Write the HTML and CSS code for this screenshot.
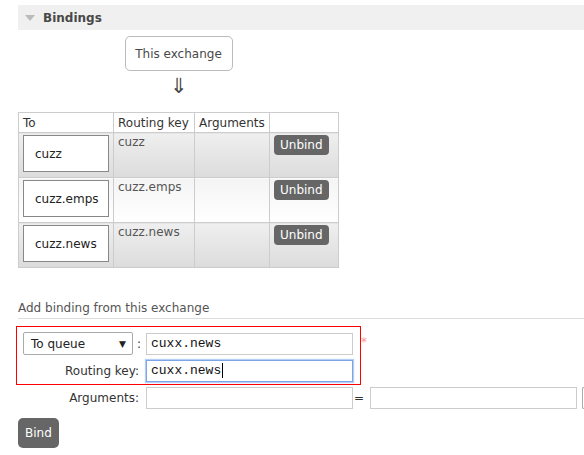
FILE: index.html
```html
<!DOCTYPE html>
<html>
<head>
<meta charset="utf-8">
<link rel="stylesheet" href="styles.css">
</head>
<body>
<div class="section-h"><span class="tri"></span><span class="title">Bindings</span></div>
<div class="bindings">
  <div class="flow">
    <div class="this-ex">This exchange</div>
    <div class="arrow">&#8659;</div>
  </div>
  <table class="list">
    <thead>
      <tr><th class="c-to">To</th><th class="c-rk">Routing key</th><th class="c-args">Arguments</th><th class="c-act"></th></tr>
    </thead>
    <tbody>
      <tr class="alt1"><td><div class="qbox">cuzz</div></td><td><div class="rk">cuzz</div></td><td></td><td><span class="btn">Unbind</span></td></tr>
      <tr class="alt2"><td><div class="qbox">cuzz.emps</div></td><td><div class="rk">cuzz.emps</div></td><td></td><td><span class="btn">Unbind</span></td></tr>
      <tr class="alt1"><td><div class="qbox">cuzz.news</div></td><td><div class="rk">cuzz.news</div></td><td></td><td><span class="btn">Unbind</span></td></tr>
    </tbody>
  </table>
</div>
<div class="add">
  <div class="add-h">Add binding from this exchange</div>
  <div class="form">
    <div class="row">
      <div class="lab"><div class="sel"><span>To queue</span><span class="dd">&#9660;</span></div><span class="colon">:</span></div>
      <div class="inp mono">cuxx.news</div>
      <span class="req">*</span>
    </div>
    <div class="row">
      <div class="lab"><span>Routing key:</span></div>
      <div class="inp mono focus">cuxx.news<span class="caret"></span></div>
    </div>
    <div class="row">
      <div class="lab"><span>Arguments:</span></div>
      <div class="inp"></div>
      <span class="eq">=</span>
      <div class="inp"></div>
      <div class="inp small"></div>
    </div>
    <div class="annot"></div>
  </div>
  <span class="btn big">Bind</span>
</div>
</body>
</html>
```
FILE: styles.css
```css
html, body { margin: 0; padding: 0; background: #fff; overflow: hidden; }
body {
  font-family: "DejaVu Sans", Verdana, sans-serif;
  font-size: 12px;
  color: #484848;
  width: 584px;
  height: 455px;
}
.section-h {
  margin: 5px 0 0 18px;
  height: 25px;
  background: #f0f0f0;
  display: flex;
  align-items: center;
}
.tri {
  width: 0; height: 0;
  margin-left: 7px;
  border-left: 5px solid transparent;
  border-right: 5px solid transparent;
  border-top: 6px solid #bbb;
}
.title { font-weight: bold; font-size: 12px; margin-left: 8px; color: #484848; }
.bindings { margin-left: 18px; width: 321px; }
.flow { display: flex; flex-direction: column; align-items: center; }
.this-ex {
  margin-top: 6px;
  width: 106px; height: 33px;
  border: 1px solid #bbb;
  border-radius: 5px;
  display: flex; align-items: center; justify-content: center;
  color: #484848;
}
.arrow { font-size: 21px; line-height: 24px; height: 24px; margin-top: 3px; color: #484848; }
.list { border-collapse: collapse; margin-top: 14px; width: 321px; }
.list th, .list td { border: 1px solid #ccc; padding: 0; }
.list th { font-weight: normal; text-align: left; height: 19px; padding: 0 4px; color: #333; background: #fff; }
.c-to { width: 86px; }
.c-rk { width: 72px; }
.c-args { width: 66px; }
.list td { height: 44px; vertical-align: top; }
.alt1 td { background: linear-gradient(#efefef, #dcdcdc); }
.alt2 td { background: linear-gradient(#f4f4f4, #fff); }
.qbox {
  margin: 2px 4px;
  border: 1px solid #888;
  background: #fff;
  box-sizing: border-box;
  width: 86px; height: 37px;
  display: flex; align-items: center;
  padding-left: 11px;
  color: #222;
}
.rk { margin: 2px 4px 0 4px; color: #555; }
.btn {
  display: inline-block;
  background: #666;
  color: #fff;
  border-radius: 4px;
  padding: 0 6px;
  height: 20px; line-height: 20px;
  margin: 2px 0 0 4px;
  vertical-align: top;
}
.add { margin: 33px 0 0 18px; }
.add-h { border-bottom: 1px solid #ddd; padding-bottom: 3px; color: #555; }
.form { position: relative; margin-top: 11px; }
.row { display: flex; align-items: center; height: 27px; }
.row > * { flex-shrink: 0; }
.lab { width: 121px; display: flex; justify-content: flex-end; align-items: center; padding-right: 7px; color: #333; }
.sel {
  border: 1px solid #aaa;
  border-radius: 2px;
  display: flex; align-items: center; justify-content: space-between;
  padding: 0 6px 0 7px; box-sizing: border-box; width: 110px; height: 23px;
  margin-left: 5px; color: #222;
}
.dd { font-size: 9px; color: #222; }
.colon { margin-left: 4px; margin-right: -2px; }
.lab:has(.sel) { justify-content: flex-start; }
.inp {
  box-sizing: border-box;
  width: 207px; height: 22px;
  border: 1px solid #ccc;
  background: #fff;
  padding-left: 4px;
  display: flex; align-items: center;
  color: #111;
}
.mono { font-family: "Liberation Mono", "Courier New", monospace; font-size: 13px; }
.focus { border: 1px solid #7aa6e6; box-shadow: 0 0 1px 1px #b7cff5; }
.caret { display: inline-block; width: 1px; height: 15px; background: #000; margin-left: 1px; }
.req { color: #f99; margin-left: 8px; font-size: 12px; align-self: flex-start; margin-top: 5px; }
.eq { margin: 0 6px 0 1px; color: #333; }
.inp.small { width: 10px; margin-left: 5px; border-right: none; border-color: #aaa; border-radius: 2px 0 0 2px; }
.annot {
  position: absolute;
  left: -2px; top: -4px;
  width: 343px; height: 57px;
  border: 1px solid #f00;
}
.btn.big { height: 30px; line-height: 30px; padding: 0 7px; margin: 7px 0 0 0; border-radius: 5px; }
```
